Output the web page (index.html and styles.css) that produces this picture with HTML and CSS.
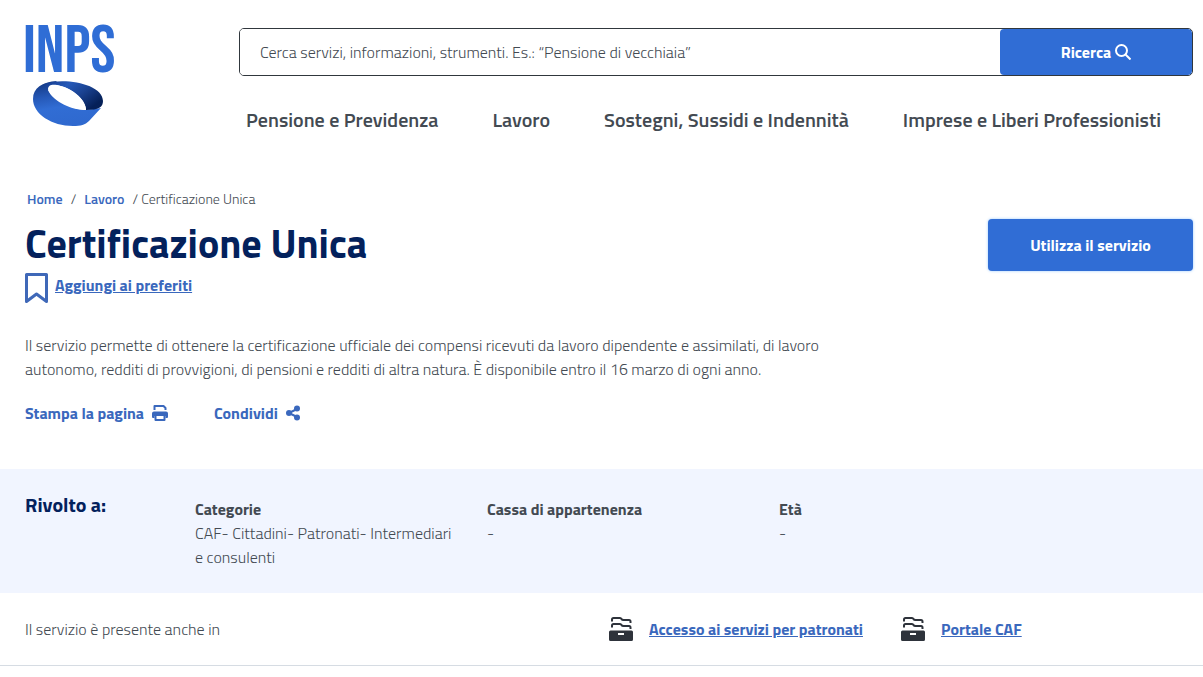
FILE: index.html
```html
<!DOCTYPE html>
<html lang="it">
<head>
<meta charset="utf-8">
<meta name="viewport" content="width=device-width, initial-scale=1">
<title>Certificazione Unica - INPS</title>
<link rel="stylesheet" href="styles.css">
</head>
<body>
<header class="header">
  <a class="logo" href="#" aria-label="INPS">
    <span class="logo-text">INPS</span>
    <svg class="logo-ring" viewBox="0 0 70 46" aria-hidden="true">
      <defs>
        <linearGradient id="base" x1="0.15" y1="0" x2="0.4" y2="1">
          <stop offset="0" stop-color="#123680"/><stop offset=".35" stop-color="#2659b8"/><stop offset=".6" stop-color="#316dd4"/><stop offset="1" stop-color="#2f69cf"/>
        </linearGradient>
        <linearGradient id="band" x1="0" y1="0" x2="1" y2="0.6">
          <stop offset="0" stop-color="#14398a"/><stop offset=".35" stop-color="#2659b8"/><stop offset=".65" stop-color="#1a4291"/><stop offset="1" stop-color="#052058"/>
        </linearGradient>
      </defs>
      <path fill="url(#base)" d="M24 0C9 1 0 7 0 18c0 15 19 27 40 27 8 0 12-1 16-5l12-13-15 2C40 29 20 19 15 9L24 0Z"/>
      <path fill="url(#band)" d="M11 3C31-4 70 3 70 20c0 6-4 9-17 9C53 18 37 5 22 4c-5 0-8 2-7 6Z"/>
      <path fill="#fff" d="M15 8c0-4 4-5 9-4 15 3 29 15 29 25C36 29 17 18 15 8Z"/>
    </svg>
  </a>
  <div class="header-main">
    <form class="search" role="search">
      <input class="search-input" type="search" aria-label="Cerca nel sito" placeholder="Cerca servizi, informazioni, strumenti. Es.: “Pensione di vecchiaia”">
      <button class="search-button" type="button">Ricerca
        <svg class="search-icon" viewBox="0 0 16 16" aria-hidden="true"><circle cx="6.500" cy="6.500" r="5.500"/><path d="m10.500 10.500 5 5"/></svg>
      </button>
    </form>
    <nav class="nav" aria-label="Principale">
      <a href="#">Pensione e Previdenza</a>
      <a href="#">Lavoro</a>
      <a href="#">Sostegni, Sussidi e Indennità</a>
      <a href="#">Imprese e Liberi Professionisti</a>
    </nav>
  </div>
</header>
<main>
  <section class="intro">
    <nav class="breadcrumb" aria-label="Percorso">
      <a href="#">Home</a><span>/</span><a href="#">Lavoro</a><span>/ Certificazione Unica</span>
    </nav>
    <div class="title-row">
      <div>
        <h1 class="title">Certificazione Unica</h1>
        <a class="favourite" href="#">
          <svg class="bookmark" viewBox="0 0 23 31" aria-hidden="true"><path d="M1.500 1.500h20v27L11.500 21l-10 7.500Z"/></svg>
          <span>Aggiungi ai preferiti</span>
        </a>
      </div>
      <button class="cta" type="button">Utilizza il servizio</button>
    </div>
    <p class="description">Il servizio permette di ottenere la certificazione ufficiale dei compensi ricevuti da lavoro dipendente e assimilati, di lavoro autonomo, redditi di provvigioni, di pensioni e redditi di altra natura. È disponibile entro il 16 marzo di ogni anno.</p>
    <div class="actions">
      <button class="action" type="button">Stampa la pagina
        <svg class="action-icon" viewBox="0 0 16 16" aria-hidden="true"><path fill="none" stroke="currentColor" stroke-width="2" stroke-linejoin="round" d="M2.500 5V1h9l2 2v2M3.500 10v5h9v-5"/><path fill="currentColor" d="M2 6.500h12a2 2 0 0 1 2 2V12a1 1 0 0 1-1 1h-1.500v-2h-11v2H1a1 1 0 0 1-1-1V8.500a2 2 0 0 1 2-2Z"/></svg>
      </button>
      <button class="action" type="button">Condividi
        <svg class="action-icon" viewBox="0 0 16 16" aria-hidden="true"><path fill="none" stroke="currentColor" stroke-width="2" d="m11 4-8 4 8 4"/><g fill="currentColor"><circle cx="11" cy="3.500" r="3"/><circle cx="3" cy="8" r="3"/><circle cx="11" cy="12.500" r="3"/></g></svg>
      </button>
    </div>
  </section>
  <section class="audience">
    <h2 class="audience-title">Rivolto a:</h2>
    <dl class="audience-list">
      <div><dt>Categorie</dt><dd>CAF- Cittadini- Patronati- Intermediari e consulenti</dd></div>
      <div><dt>Cassa di appartenenza</dt><dd>-</dd></div>
      <div><dt>Età</dt><dd>-</dd></div>
    </dl>
  </section>
  <section class="related">
    <p>Il servizio è presente anche in</p>
    <a class="related-link" href="#">
      <svg class="files" viewBox="0 0 24 24" aria-hidden="true"><path class="tabs" d="M3 4.500V2.500Q3 1 4.500 1h6.500q1 0 1.500 1t2 1H20q1.500 0 1.500 1.500V6M3 10.500V8.500Q3 7 4.500 7h6.500q1 0 1.500 1t2 1H20q1.500 0 1.500 1.500V12"/><path class="drawer" d="M1.500 13.500h21A1.500 1.500 0 0 1 24 15v7.500a1.500 1.500 0 0 1-1.500 1.500h-21A1.500 1.500 0 0 1 0 22.500V15a1.500 1.500 0 0 1 1.500-1.500ZM9 16v2h6v-2Z"/></svg>
      <span>Accesso ai servizi per patronati</span>
    </a>
    <a class="related-link" href="#">
      <svg class="files" viewBox="0 0 24 24" aria-hidden="true"><path class="tabs" d="M3 4.500V2.500Q3 1 4.500 1h6.500q1 0 1.500 1t2 1H20q1.500 0 1.500 1.500V6M3 10.500V8.500Q3 7 4.500 7h6.500q1 0 1.500 1t2 1H20q1.500 0 1.500 1.500V12"/><path class="drawer" d="M1.500 13.500h21A1.500 1.500 0 0 1 24 15v7.500a1.500 1.500 0 0 1-1.500 1.500h-21A1.500 1.500 0 0 1 0 22.500V15a1.500 1.500 0 0 1 1.500-1.500ZM9 16v2h6v-2Z"/></svg>
      <span>Portale CAF</span>
    </a>
  </section>
</main>
</body>
</html>
```
FILE: styles.css
```css
* { box-sizing: border-box; }
body {
  margin: 0;
  background: #fff;
  color: #434a52;
  font: 300 16px/24px "Titillium Web", Roboto, "Liberation Sans", sans-serif;
}
h1, h2, p, dl, dd { margin: 0; }
a { color: #3a68bd; }
button, input { font: inherit; }
svg { display: block; flex: none; }

.header {
  display: grid;
  grid-template-columns: 216px minmax(0, 1fr);
  padding: 24px 10px 0 23px;
}
.logo { justify-self: start; color: #2f6dd5; text-decoration: none; }
.logo-text {
  display: block;
  height: 57px;
  font: 400 67px/56px "Bebas Neue", "League Gothic", Antonio, "Roboto Condensed", sans-serif;
}
.logo-ring { width: 70px; height: 46px; margin-left: 10px; }
.header-main { padding-top: 4px; }
.search {
  display: flex;
  height: 48px;
  border: 1px solid #30373d;
  border-radius: 5px;
  overflow: hidden;
}
.search-input {
  flex: 1;
  min-width: 0;
  padding: 0 20px;
  border: 0;
  outline: 0;
  background: #fff;
  color: #434a52;
}
.search-input::placeholder { color: #434a52; opacity: 1; }
.search-button {
  display: flex;
  flex: 0 0 192px;
  align-items: center;
  justify-content: center;
  gap: 4px;
  padding: 0;
  border: 0;
  border-radius: 4px;
  background: #306dd5;
  color: #fff;
  font-weight: 700;
}
.search-icon { width: 16px; height: 16px; fill: none; stroke: #fff; stroke-width: 2; }
.nav {
  display: flex;
  justify-content: space-between;
  padding: 30px 32px 0 7px;
}
.nav a { color: #434a52; font-size: 20px; line-height: 28px; font-weight: 600; text-decoration: none; }

.intro { padding: 54px 10px 44px 25px; }
.breadcrumb {
  display: flex;
  gap: 8px;
  padding-left: 2px;
  font-size: 14px;
  line-height: 22px;
}
.breadcrumb a { font-weight: 600; text-decoration: none; }
.title-row { display: flex; justify-content: space-between; align-items: flex-start; }
.title { padding-top: 8px; color: #03215c; font-size: 40px; line-height: 52px; font-weight: 700; }
.favourite { display: flex; gap: 7px; padding-top: 3px; font-weight: 700; }
.bookmark { width: 23px; height: 31px; fill: none; stroke: #3f68b8; stroke-width: 3; stroke-linejoin: round; }
.cta {
  width: 205px;
  height: 52px;
  margin-top: 9px;
  padding: 0;
  border: 0;
  border-radius: 4px;
  background: #306dd5;
  box-shadow: 0 0 3px #9ccbff;
  color: #fff;
  font-weight: 700;
}
.description { max-width: 820px; padding-top: 29px; }
.actions { display: flex; gap: 46px; padding-top: 20px; }
.action {
  display: flex;
  align-items: center;
  gap: 8px;
  padding: 0;
  border: 0;
  background: none;
  color: #3a68bd;
  font-weight: 700;
}
.action-icon { width: 16px; height: 16px; }

.audience {
  display: grid;
  grid-template-columns: 170px minmax(0, 1fr);
  padding: 22px 10px 24px 25px;
  background: #f1f5ff;
}
.audience-title { color: #03215c; font-size: 20px; line-height: 28px; font-weight: 700; }
.audience-list {
  display: grid;
  grid-template-columns: repeat(3, minmax(0, 292fr)) 122fr;
  padding-top: 6px;
}
.audience-list dt { font-weight: 700; }
.audience-list dd { padding-right: 30px; }

.related {
  display: grid;
  grid-template-columns: minmax(0, 2fr) minmax(0, 1fr) minmax(0, 1fr);
  align-items: center;
  padding: 24px 10px 24px 25px;
  border-bottom: 1px solid #d6dce3;
}
.related-link { display: flex; align-items: center; gap: 16px; font-weight: 700; white-space: nowrap; }
.files { width: 24px; height: 24px; }
.files .tabs { fill: none; stroke: #2e333b; stroke-width: 2; }
.files .drawer { fill: #2e333b; fill-rule: evenodd; }
```
